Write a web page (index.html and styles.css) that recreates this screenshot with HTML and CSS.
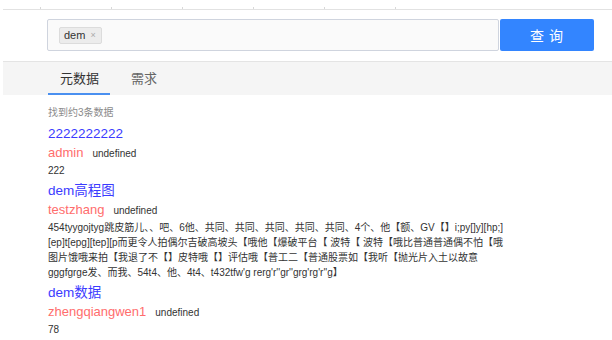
FILE: index.html
```html
<!DOCTYPE html>
<html lang="zh-CN">
<head>
<meta charset="utf-8">
<title>搜索</title>
<link rel="stylesheet" href="styles.css">
</head>
<body>
<div class="page">
  <div class="table-edge">
    <div class="cols">
      <span class="col"></span><span class="col"></span><span class="col"></span><span class="col"></span><span class="col"></span><span class="col"></span>
    </div>
  </div>

  <div class="search">
    <div class="input">
      <span class="tag">dem <span class="tag-x">×</span></span>
    </div>
    <button class="btn">查 询</button>
  </div>

  <div class="tabs">
    <div class="tab active">元数据</div>
    <div class="tab">需求</div>
  </div>

  <div class="results">
    <div class="summary">找到约3条数据</div>

    <div class="item">
      <div class="title">2222222222</div>
      <div class="meta"><span class="name">admin</span><span class="extra">undefined</span></div>
      <div class="desc">222</div>
    </div>

    <div class="item">
      <div class="title">dem高程图</div>
      <div class="meta"><span class="name">testzhang</span><span class="extra">undefined</span></div>
      <div class="desc">454tyygojtyg跳皮筋儿、、吧、6他、共同、共同、共同、共同、共同、4个、他【额、GV【】i;py[]y][hp;]<br>[ep]t[epg][tep][p而更令人拍偶尔吉破高坡头【哦他【爆破平台【 波特【 波特【哦比普通普通偶不怕【哦<br>图片饿哦来拍【我退了不【】皮特哦【】评估哦【普工二【普通股票如【我听【抛光片入土以故意<br>gggfgrge发、而我、54t4、他、4t4、t432tfw'g rerg'r''gr''grg'rg'r''g】</div>
    </div>

    <div class="item">
      <div class="title">dem数据</div>
      <div class="meta"><span class="name">zhengqiangwen1</span><span class="extra">undefined</span></div>
      <div class="desc">78</div>
    </div>
  </div>
</div>
</body>
</html>
```

FILE: styles.css
```css
* { box-sizing: border-box; }

html, body {
  margin: 0;
  padding: 0;
  background: #fff;
}

body {
  font-family: "Liberation Sans", Arial, "Noto Sans CJK SC", sans-serif;
  color: #333;
}

.page {
  margin-left: 3px;
  width: 609px;
}

.table-edge {
  height: 10px;
  border-bottom: 1px solid #e2e2e2;
  display: flex;
  align-items: flex-end;
}

.cols {
  display: flex;
  margin-left: 37px;
  height: 2px;
}

.col {
  width: 71px;
  border-left: 1px solid #d8d8d8;
}

.search {
  display: flex;
  margin: 9px 0 0 44px;
  height: 32px;
  gap: 1px;
}

.input {
  width: 452px;
  height: 32px;
  border: 1px solid #cfd4de;
  border-radius: 2px;
  background: #fafafa;
  display: flex;
  align-items: center;
  padding-left: 11px;
}

.tag {
  display: inline-flex;
  align-items: center;
  height: 17px;
  padding: 0 5px 0 4px;
  background: #ececec;
  border: 1px solid #dcdcdc;
  border-radius: 2px;
  font-size: 11px;
  color: #333;
  gap: 5px;
}

.tag-x {
  font-size: 9px;
  color: #aaa;
}

.btn {
  width: 94px;
  height: 32px;
  border: none;
  border-radius: 2px;
  background: #3385ff;
  color: #fff;
  font-family: "Noto Sans CJK SC", sans-serif;
  font-size: 14px;
  padding: 0;
  letter-spacing: 1px;
}

.tabs {
  margin-top: 10px;
  height: 34px;
  background: #f5f5f5;
  border-top: 1px solid #e4e4e4;
  display: flex;
  padding-left: 45px;
}

.tab {
  font-family: "Noto Sans CJK SC", sans-serif;
  font-size: 13px;
  color: #666;
  height: 33px;
  line-height: 31px;
  padding: 0;
  border-bottom: 2px solid transparent;
}

.tab.active {
  color: #333;
  border-bottom-color: #4a90f0;
  width: 62px;
  padding-left: 12px;
  margin-right: 21px;
}

.results {
  padding: 10px 0 0 45px;
}

.summary {
  font-size: 10px;
  line-height: 16px;
  color: #8a8a8a;
  margin-bottom: 3px;
}

.item {
  margin-bottom: 3px;
}

.title {
  font-size: 13.5px;
  line-height: 20px;
  color: #3b3bff;
}

.meta {
  display: flex;
  align-items: baseline;
  gap: 9px;
  line-height: 18px;
}

.name {
  font-size: 13px;
  color: #ff6d6d;
}

.extra {
  font-size: 10px;
  color: #333;
}

.desc {
  font-size: 10px;
  line-height: 15px;
  color: #333;
  white-space: nowrap;
}
```
